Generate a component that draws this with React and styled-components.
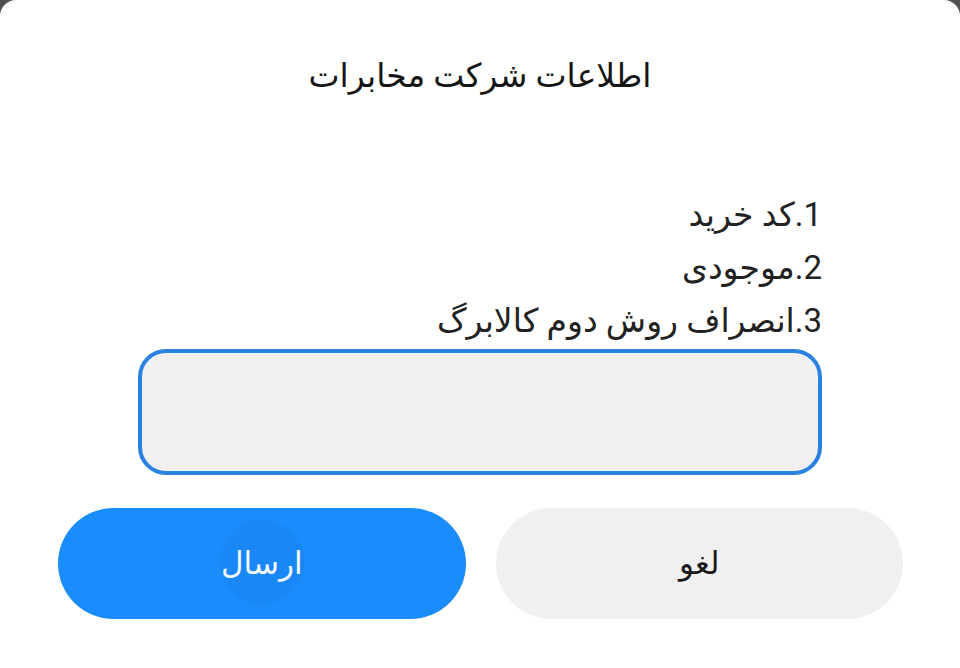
import React from "react";
import styled, { createGlobalStyle } from "styled-components";

const GlobalStyle = createGlobalStyle`
  html, body {
    margin: 0;
    padding: 0;
    background: #4f4f4f;
  }
  body {
    font-family: Roboto, "DejaVu Sans", "Noto Sans", sans-serif;
  }
`;

const Sheet = styled.div`
  width: 960px;
  height: 668px;
  background: #ffffff;
  border-radius: 16px 16px 0 0;
  display: flex;
  flex-direction: column;
  box-sizing: border-box;
  overflow: hidden;
`;

const Title = styled.h1`
  margin: 0;
  padding-top: 52px;
  text-align: center;
  font-size: 33px;
  font-weight: 400;
  line-height: 48px;
  color: #151515;
`;

const Options = styled.div`
  direction: rtl;
  margin-top: 88px;
  padding-right: 138px;
  font-size: 33px;
  line-height: 53px;
  color: #222222;
`;

const Option = styled.div`
  white-space: nowrap;
`;

const Field = styled.input`
  display: block;
  margin: 2px 138px 0;
  height: 126px;
  box-sizing: border-box;
  border: 4.5px solid #2a82e0;
  border-radius: 28px;
  background: #f0f0f0;
  outline: none;
  direction: rtl;
  font: inherit;
  font-size: 28px;
  padding: 0 24px;
`;

const Actions = styled.div`
  display: flex;
  gap: 30px;
  padding: 0 57px 0 58px;
  margin-top: 33px;
`;

const Button = styled.button`
  position: relative;
  flex: 1;
  height: 111px;
  border: none;
  border-radius: 56px;
  background: ${(p) => (p.$primary ? "#1a8cfb" : "#f0f0f0")};
  color: ${(p) => (p.$primary ? "#f4f8ff" : "#1a1a1a")};
  font-family: inherit;
  font-size: 31px;
  overflow: hidden;
  cursor: pointer;

  span {
    position: relative;
  }

  /* faint touch ripple seen on the send button */
  &::before {
    content: ${(p) => (p.$primary ? '""' : "none")};
    position: absolute;
    left: 162px;
    top: 12px;
    width: 84px;
    height: 84px;
    border-radius: 50%;
    background: rgba(0, 40, 120, 0.035);
  }
`;

const items = ["1.کد خرید", "2.موجودی", "3.انصراف روش دوم کالابرگ"];

export default function App() {
  return (
    <>
      <GlobalStyle />
      <Sheet>
        <Title>اطلاعات شرکت مخابرات</Title>
        <Options>
          {items.map((t) => (
            <Option key={t}>{t}</Option>
          ))}
        </Options>
        <Field type="text" />
        <Actions>
          <Button $primary>
            <span>ارسال</span>
          </Button>
          <Button>
            <span>لغو</span>
          </Button>
        </Actions>
      </Sheet>
    </>
  );
}
